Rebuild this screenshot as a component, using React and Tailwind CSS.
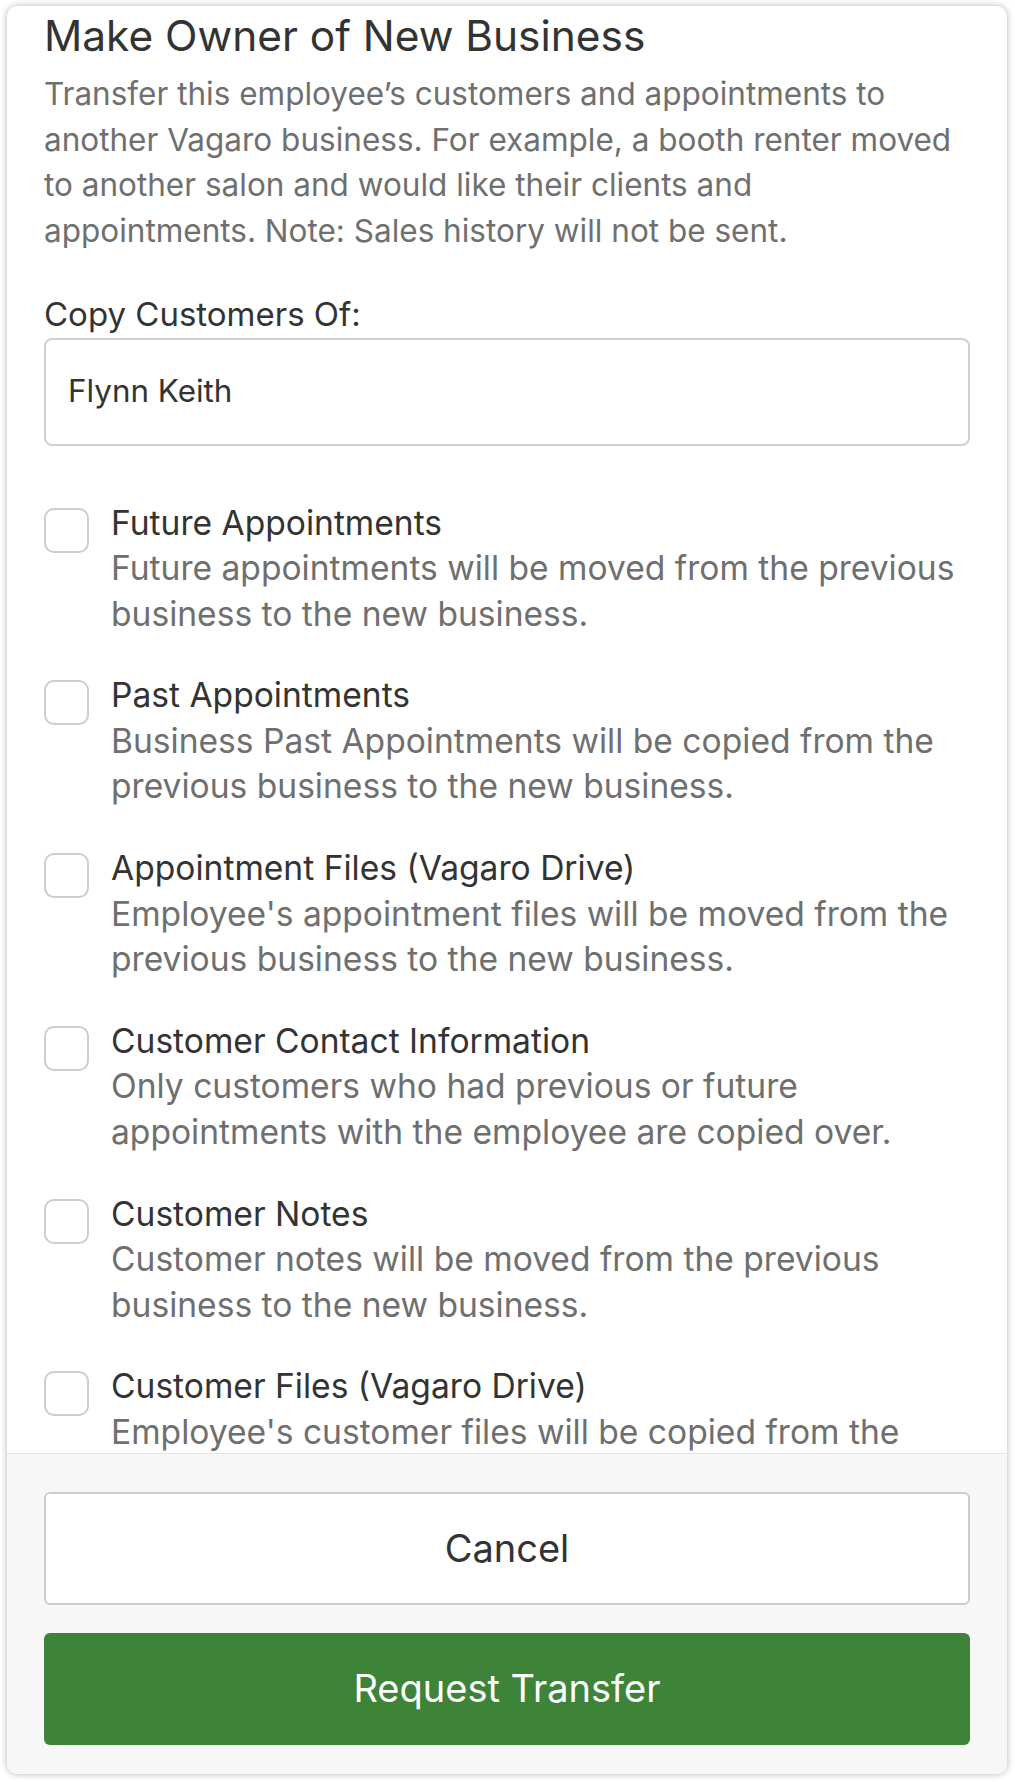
import React from "react";

const items = [
  {
    title: "Future Appointments",
    lines: ["Future appointments will be moved from the previous", "business to the new business."],
  },
  {
    title: "Past Appointments",
    lines: ["Business Past Appointments will be copied from the", "previous business to the new business."],
  },
  {
    title: "Appointment Files (Vagaro Drive)",
    lines: ["Employee's appointment files will be moved from the", "previous business to the new business."],
  },
  {
    title: "Customer Contact Information",
    lines: ["Only customers who had previous or future", "appointments with the employee are copied over."],
  },
  {
    title: "Customer Notes",
    lines: ["Customer notes will be moved from the previous", "business to the new business."],
  },
  {
    title: "Customer Files (Vagaro Drive)",
    lines: ["Employee's customer files will be copied from the", "previous business to the new business."],
  },
];

function Item({ item }) {
  return (
    <div className="flex gap-[22px]">
      <div className="mt-[8px] w-[45px] h-[45px] shrink-0 rounded-[10px] border-2 border-[#cdcdcd] bg-white" />
      <div className="flex flex-col">
        <div className="text-[33.6px] leading-[45.5px] text-[#333333] whitespace-nowrap">{item.title}</div>
        {item.lines.map((l, i) => (
          <div key={i} className="text-[33.6px] leading-[45.5px] text-[#6f6f6f] whitespace-nowrap">
            {l}
          </div>
        ))}
      </div>
    </div>
  );
}

export default function App() {
  return (
    <div
      className="w-[1015px] h-[1782px] bg-white pt-[6px] pl-[7px]"
      style={{ fontFamily: "Inter, 'Liberation Sans', sans-serif" }}
    >
      <div className="w-[1000px] h-[1768px] bg-white rounded-[10px] shadow-[0_0_7px_rgba(0,0,0,0.3)] overflow-hidden flex flex-col">
        <div className="h-[1447px] overflow-hidden px-[37px] pt-[6px] shrink-0">
          <h1 className="text-[42.4px] leading-[48px] text-[#333333] font-normal whitespace-nowrap">
            Make Owner of New Business
          </h1>
          <div className="mt-[11px] text-[31.5px] leading-[45.5px] text-[#6f6f6f]">
            <div className="whitespace-nowrap">Transfer this employee’s customers and appointments to</div>
            <div className="whitespace-nowrap">another Vagaro business. For example, a booth renter moved</div>
            <div className="whitespace-nowrap">to another salon and would like their clients and</div>
            <div className="whitespace-nowrap">appointments. Note: Sales history will not be sent.</div>
          </div>
          <div className="mt-[39px] text-[33px] leading-[45.5px] text-[#333333]">Copy Customers Of:</div>
          <div className="h-[108px] rounded-[8px] border-2 border-[#d0d0d0] flex items-center px-[22px] text-[31.4px] text-[#333333]">
            Flynn Keith
          </div>
          <div className="mt-[54px] flex flex-col gap-[36.3px]">
            {items.map((it, i) => (
              <Item key={i} item={it} />
            ))}
          </div>
        </div>
        <div className="flex-1 border-t border-[#e4e4e4] bg-[#f7f7f7] px-[37px] pt-[38px] flex flex-col gap-[28px]">
          <button className="h-[112.5px] w-full rounded-[6px] border-2 border-[#cccccc] bg-white text-[38px] text-[#333333]">
            Cancel
          </button>
          <button className="h-[112.5px] w-full rounded-[6px] bg-[#3d8338] text-[38px] text-white">
            Request Transfer
          </button>
        </div>
      </div>
    </div>
  );
}
